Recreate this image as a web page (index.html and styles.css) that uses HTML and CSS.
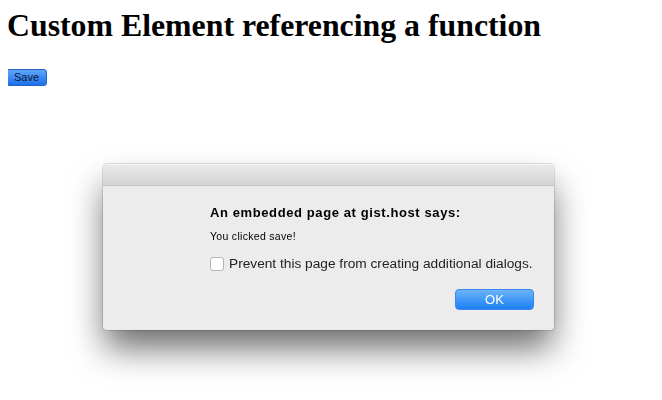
FILE: index.html
```html
<!DOCTYPE html>
<html>
<head>
<meta charset="utf-8">
<title>Custom Element</title>
<link rel="stylesheet" href="styles.css">
</head>
<body>
<h1 class="title">Custom Element referencing a function</h1>
<button class="save-btn">Save</button>

<div class="alert">
  <div class="alert-titlebar"></div>
  <div class="alert-body">
    <div class="alert-heading">An embedded page at gist.host says:</div>
    <div class="alert-message">You clicked save!</div>
    <label class="alert-check">
      <span class="checkbox"></span>
      <span class="check-label">Prevent this page from creating additional dialogs.</span>
    </label>
    <div class="alert-actions">
      <button class="ok-btn">OK</button>
    </div>
  </div>
</div>
</body>
</html>
```

FILE: styles.css
```css
html, body {
  background: #ffffff;
}
body {
  margin: 8px;
  font-family: "Liberation Serif", "Times New Roman", serif;
}
.title {
  font-family: "Liberation Serif", "Times New Roman", serif;
  font-size: 31.8px;
  font-weight: bold;
  margin: 0 0 25px -1px;
  color: #000;
}
.save-btn {
  display: block;
  margin: 0 0 0 -2px;
  width: 41px;
  height: 17px;
  padding: 0;
  border: 1px solid #2563c9;
  border-radius: 3px;
  background: linear-gradient(#5ea6fc, #1c6fe8);
  font-family: "Liberation Sans", Arial, sans-serif;
  font-size: 11px;
  color: #0b1836;
  line-height: 15px;
}
.alert {
  position: fixed;
  left: 103px;
  top: 164px;
  width: 451px;
  height: 166px;
  background: #ececec;
  border-radius: 4px;
  box-shadow: 0 0 0 1px rgba(0,0,0,0.12), 0 20px 34px -2px rgba(0,0,0,0.58);
  font-family: "Liberation Sans", Arial, sans-serif;
  color: #000;
  overflow: hidden;
}
.alert-titlebar {
  height: 21px;
  background: linear-gradient(#ebebeb, #d4d4d4);
  border-bottom: 1px solid #c2c2c2;
  box-shadow: inset 0 1px 0 #f6f6f6;
}
.alert-body {
  padding: 19px 20px 0 107px;
  display: flex;
  flex-direction: column;
}
.alert-heading {
  font-size: 13px;
  font-weight: bold;
  letter-spacing: 0.6px;
  line-height: 15px;
}
.alert-message {
  margin-top: 10px;
  font-size: 10.5px;
  letter-spacing: 0.3px;
  line-height: 12px;
}
.alert-check {
  margin-top: 14px;
  display: flex;
  align-items: center;
  gap: 5px;
  font-size: 13.7px;
  line-height: 15px;
  color: #222;
}
.checkbox {
  width: 12px;
  height: 12px;
  border: 1px solid #b5b5b5;
  border-radius: 3px;
  background: #fff;
  flex: none;
}
.alert-actions {
  display: flex;
  justify-content: flex-end;
  margin-top: 18px;
}
.ok-btn {
  width: 79px;
  height: 21px;
  border: 1px solid #3b87ef;
  border-radius: 4px;
  background: linear-gradient(#6cb3fa, #1b80f5);
  color: #fff;
  font-family: "Liberation Sans", Arial, sans-serif;
  font-size: 13px;
  padding: 0;
}
```
